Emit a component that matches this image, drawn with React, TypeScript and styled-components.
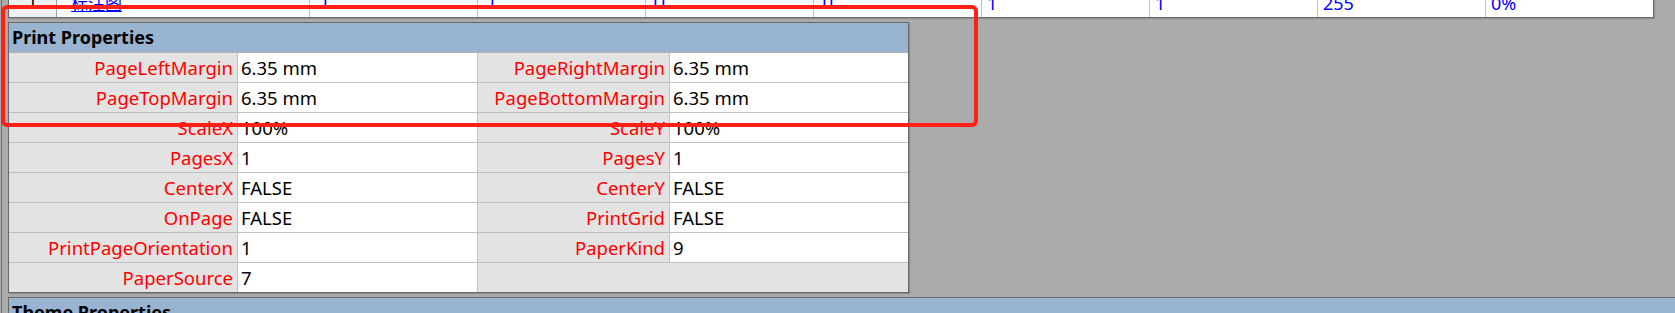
import React from "react";
import styled, { createGlobalStyle } from "styled-components";

const GlobalStyle = createGlobalStyle`
  html,
  body {
    margin: 0;
    padding: 0;
  }

  body {
    background: #ababab;
    font-family: "Noto Sans", "Noto Sans CJK SC", sans-serif;
    overflow: hidden;
  }
`;

type SheetCellData = {
  text: string;
  head?: boolean;
  link?: boolean;
  raised?: boolean;
  inset?: number;
  spread?: number;
};

const sheetCells: SheetCellData[] = [
  { text: "1", head: true, raised: true },
  { text: "标注图", link: true, inset: 9 },
  { text: "l", raised: true, inset: 8 },
  { text: "l", raised: true, inset: 7 },
  { text: "ll", raised: true, inset: 2, spread: 3.4 },
  { text: "ll", raised: true, inset: 3, spread: 2.4 },
  { text: "1" },
  { text: "1" },
  { text: "255" },
  { text: "0%" },
];

const printRows: (string | null)[][] = [
  ["PageLeftMargin", "6.35 mm", "PageRightMargin", "6.35 mm"],
  ["PageTopMargin", "6.35 mm", "PageBottomMargin", "6.35 mm"],
  ["ScaleX", "100%", "ScaleY", "100%"],
  ["PagesX", "1", "PagesY", "1"],
  ["CenterX", "FALSE", "CenterY", "FALSE"],
  ["OnPage", "FALSE", "PrintGrid", "FALSE"],
  ["PrintPageOrientation", "1", "PaperKind", "9"],
  ["PaperSource", "7", null, null],
];

export default function App() {
  return (
    <Screen>
      <GlobalStyle />
      <Page>
        <SheetRow>
          {sheetCells.map((cell, i) => (
            <SheetCell key={i} $head={cell.head} $raised={cell.raised}>
              {cell.link ? (
                <SheetLink $inset={cell.inset ?? 0}>{cell.text}</SheetLink>
              ) : (
                <SheetText
                  $head={cell.head}
                  $inset={cell.inset ?? 0}
                  $spread={cell.spread ?? 0}
                >
                  {cell.text}
                </SheetText>
              )}
            </SheetCell>
          ))}
        </SheetRow>

        <Panel>
          <PanelHeader>Print Properties</PanelHeader>
          <PropGrid>
            {printRows.map((row, r) => (
              <React.Fragment key={r}>
                <Label>{row[0]}</Label>
                <Value>{row[1]}</Value>
                {row[2] === null ? (
                  <Label $span={2} />
                ) : (
                  <>
                    <Label>{row[2]}</Label>
                    <Value>{row[3]}</Value>
                  </>
                )}
              </React.Fragment>
            ))}
          </PropGrid>
        </Panel>

        <ThemePanel>
          <PanelHeader>Theme Properties</PanelHeader>
        </ThemePanel>
      </Page>
      <Annotation />
    </Screen>
  );
}

const Screen = styled.div`
  position: relative;
  width: 1675px;
  height: 313px;
  overflow: hidden;
`;

const Page = styled.div`
  box-sizing: border-box;
  width: 1674px;
  height: 313px;
  margin-left: 1px;
  padding-left: 6px;
  border-left: 1px solid #5a6db3;

  display: flex;
  flex-direction: column;
`;

const SheetRow = styled.div`
  box-sizing: border-box;
  width: 1646px;
  margin-top: -12px;

  display: grid;
  grid-template-columns: 47px 252px repeat(8, 167px);
  grid-auto-rows: 29px;
  column-gap: 1px;

  background: #c0c0c0;
  border: 1px solid #696969;
  border-top: none;
  box-shadow: 1px 1px 1px rgba(0, 0, 0, 0.15);
`;

const SheetCell = styled.div<{ $head?: boolean; $raised?: boolean }>`
  display: flex;
  align-items: center;
  justify-content: ${(p) => (p.$head ? "center" : "flex-start")};

  padding: 0 5px ${(p) => (p.$raised ? "10px" : "0")};

  background: ${(p) => (p.$head ? "#f0f0f0" : "#ffffff")};
  border-right: ${(p) => (p.$head ? "1px solid #a0a0a0" : "none")};
  margin-right: ${(p) => (p.$head ? "-1px" : "0")};
  overflow: hidden;
`;

const SheetText = styled.span<{
  $head?: boolean;
  $inset: number;
  $spread: number;
}>`
  margin-left: ${(p) => p.$inset}px;

  font-size: 18px;
  color: ${(p) => (p.$head ? "#000000" : "#0000ff")};
  letter-spacing: ${(p) => p.$spread}px;
  white-space: nowrap;
`;

const SheetLink = styled.span<{ $inset: number }>`
  margin-left: ${(p) => p.$inset}px;

  font-size: 17px;
  color: #0000ff;
  text-decoration: underline;
  white-space: nowrap;
`;

const Panel = styled.section`
  box-sizing: border-box;
  width: 901px;
  margin-top: 4px;

  border: 1px solid #696969;
  box-shadow: 1px 1px 1px rgba(0, 0, 0, 0.18);
`;

const PanelHeader = styled.div`
  box-sizing: border-box;
  height: 29px;

  display: flex;
  align-items: center;

  padding: 0 0 2px 3px;

  background: #99b4d1;
  font-size: 18px;
  font-weight: 700;
  color: #000000;
  white-space: nowrap;
`;

const PropGrid = styled.div`
  display: grid;
  grid-template-columns: 228px 239px 191px 238px;
  grid-auto-rows: 29px;
  gap: 1px;

  background: #c0c0c0;
  border-top: 1px solid #b0b0b0;
`;

const Label = styled.div<{ $span?: number }>`
  grid-column: span ${(p) => p.$span ?? 1};

  display: flex;
  align-items: center;
  justify-content: flex-end;

  padding: 0 4px 1px 0;

  background: #e3e3e3;
  font-size: 18.5px;
  color: #ff0000;
  white-space: nowrap;
`;

const Value = styled.div`
  display: flex;
  align-items: center;

  padding: 0 0 1px 3px;

  background: #ffffff;
  font-size: 18.5px;
  color: #000000;
  white-space: nowrap;
`;

const ThemePanel = styled.section`
  flex: 1;
  margin-top: 4px;

  border-top: 1px solid #696969;
  border-left: 1px solid #696969;
  background: #99b4d1;
`;

const Annotation = styled.div`
  position: absolute;
  left: 1px;
  top: 5px;

  box-sizing: border-box;
  width: 977px;
  height: 122px;

  border: 4px solid #ff2116;
  border-radius: 6px;
  pointer-events: none;
`;
